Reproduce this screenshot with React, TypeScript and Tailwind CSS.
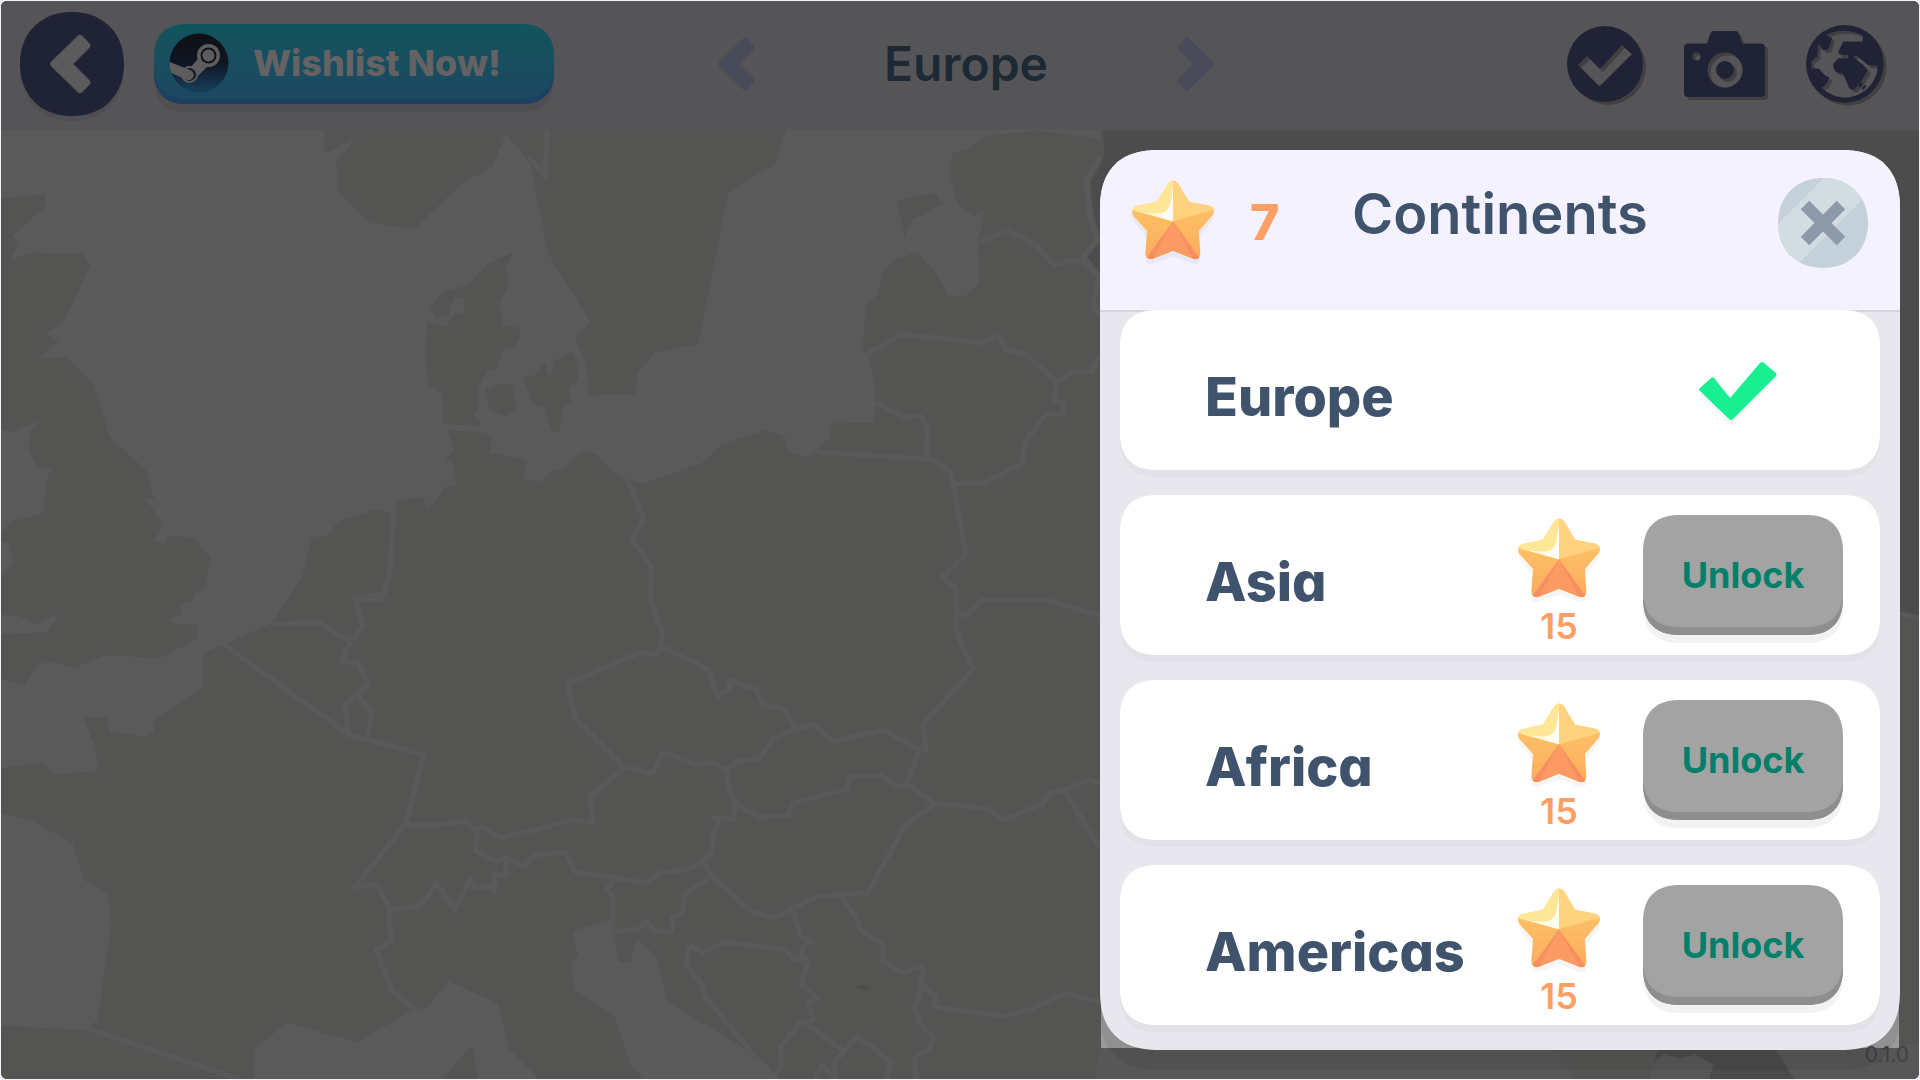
import React from 'react';

interface MapTile {
  transform: string;
  sea: string[];
  islands: string[];
  borders: string[];
}

interface Continent {
  name: string;
  cost: number;
  unlocked: boolean;
}

const continents: Continent[] = [
  { name: 'Europe', cost: 0, unlocked: true },
  { name: 'Asia', cost: 15, unlocked: false },
  { name: 'Africa', cost: 15, unlocked: false },
  { name: 'Americas', cost: 15, unlocked: false },
];

// The map is stored as four tiles, each in its own grid
const tiles: MapTile[] = [
  {
    transform: 'translate(0 120) scale(0.35714 0.33333)',
    sea: [
      '0,28 907,28 907,100 995,50 940,125 943,215 1035,308 1160,326 1290,190 1375,142 1415,42 1470,108 1485,135 1505,250 1530,390 1568,465 1568,715 1550,720 1540,765 1533,765 1525,728 1495,765 1465,772 1490,850 1522,862 1545,935 1568,935 1568,1050 1548,1050 1512,1085 1462,1075 1475,1020 1370,998 1377,950 1355,938 1250,930 1270,990 1245,1018 1268,1030 1275,1097 1245,1100 1200,1165 1180,1132 1105,1142 1100,1185 1055,1168 943,1205 915,1250 870,1250 845,1370 803,1440 540,1440 540,1425 575,1400 587,1312 540,1252 470,1248 460,1275 430,1262 455,1215 405,1135 430,1137 405,1048 305,953 260,790 185,712 100,715 165,662 122,640 175,610 250,435 230,400 90,397 27,417 50,370 33,345 122,262 122,220 0,235',
      '0,930 35,935 108,903 80,940 77,990 105,1045 140,1045 125,1090 120,1175 100,1185 35,1203 0,1235',
      '0,1265 20,1270 35,1325 0,1370',
    ],
    islands: [
      '1435,397 1365,430 1310,495 1237,515 1203,565 1222,592 1255,585 1270,530 1298,532 1297,585 1275,578 1245,620 1195,602 1190,700 1197,793 1238,820 1240,910 1350,918 1325,885 1340,860 1337,805 1365,752 1390,745 1410,680 1437,683 1458,650 1450,622 1408,615 1397,550 1422,500 1417,440',
      '1358,808 1395,792 1435,790 1447,872 1415,888 1368,868',
    ],
    borders: [
      '1102,1145 1090,1360 1072,1420 985,1440',
      '1530,28 1525,170 1480,108',
    ],
  },
  {
    transform: 'translate(540 120) scale(0.35714 0.33333)',
    sea: [
      '690,28 658,130 527,215 443,670 322,697 273,755 265,823 137,825 130,735 97,655 140,605 20,400 0,270 0,730 15,728 22,765 32,765 38,720 90,697 105,725 105,780 78,805 90,848 62,860 55,935 35,935 8,860 0,850 0,1085 35,1050 70,1045 112,995 155,1000 205,1055 240,1075 285,1090 455,1028 505,973 635,930 685,950 697,995 745,1012 775,990 808,955 817,910 935,908 940,810 918,705 903,695 912,560 945,520 960,450 990,420 1055,395 1110,460 1145,527 1190,527 1230,485 1227,370 1243,270 1215,288 1170,255 1148,170 1153,100 1200,85 1250,45 1400,30 1568,55 1568,28',
    ],
    islands: ['1000,245 1045,228 1107,220 1128,250 1040,300 1020,350'],
    borders: [
      '1230,365 1310,330 1385,370 1440,437 1485,420 1530,430 1565,470 1550,550 1568,590',
      '1568,110 1530,185 1540,280 1560,360 1522,410 1545,440',
      '910,705 1012,642 1240,668 1282,643 1305,688 1360,703 1447,785 1490,757 1545,755 1568,705',
      '1447,785 1440,840 1470,853 1460,883 1418,880 1358,965 1350,1030 1240,1090 1150,1090',
      '940,847 1020,893 1065,887 1087,925 1080,1015',
      '770,995 1100,1018 1150,1055 1160,1110 1193,1303 1125,1373 1165,1405 1165,1440',
      '240,1070 288,1195 258,1260 310,1340 308,1440',
    ],
  },
  {
    transform: 'translate(0 600) scale(0.35714 0.33333)',
    sea: [
      '0,45 50,47 97,75 165,40 125,97 0,103',
      '540,0 500,15 508,40 475,60 485,72 552,75 550,118 445,175 295,165 205,205 140,185 100,195 65,258 0,237 0,507 120,488 150,525 272,513 260,430 228,352 295,352 305,395 400,410 430,392 427,360 565,262 568,157 625,135 715,90 762,68 798,0',
      '0,643 80,660 200,730 233,842 300,880 308,980 270,1260 240,1293 0,1277',
      '708,1440 710,1350 800,1270 997,1327 1155,1232 1195,1223 1255,1145 1393,1212 1425,1350 1510,1440 1335,1440 1325,1345 1310,1345 1240,1440',
    ],
    islands: [],
    borders: [
      '620,130 975,405 1185,465 1135,672 992,862 1052,853 1088,925 1092,1022 1052,1052 1098,1175 1160,1230',
      '762,72 890,68 980,125 1015,78 995,0 1070,0',
      '980,125 955,185 1000,190 1030,252 965,315 972,400',
      '1000,285 1040,340 1027,412',
      '1135,675 1220,677 1300,665 1330,690 1350,683 1400,715 1512,687',
      '1335,690 1330,755 1390,785 1410,770 1465,800 1500,765 1512,765',
      '1415,780 1415,830 1385,820 1382,875 1375,860 1330,867 1315,840 1272,932 1220,850 1195,895 1165,922 1090,930',
      '240,1285 670,1440',
    ],
  },
  {
    transform: 'translate(540 600) scale(0.35714 0.33333)',
    sea: [
      '90,995 200,955 205,990 220,1088 250,1088 272,1020 325,1070 355,1205 620,1380 670,1440 290,1440 255,1400 207,1250 98,1175 83,1095 105,1065',
    ],
    islands: [],
    borders: [
      '308,0 343,100 328,165 280,158 75,252 98,357 232,500 315,522 343,458 435,493 485,490 522,510 550,485 612,478 650,420 712,387 768,375 820,425 962,390 1062,450 1028,550 1103,610 1250,627 1300,660 1408,612 1430,578 1468,572 1540,540 1568,550',
      '338,140 470,208 497,290 535,262 528,240 605,270 625,315 685,328 715,387',
      '232,505 140,590 147,668 90,660 0,687',
      '522,510 525,560 547,610 610,652 695,648 705,612 860,567 870,528 960,528 997,562 1028,553',
      '547,610 540,658 485,655 500,670 485,700 480,760 455,785 415,808 335,820 298,850 98,817 70,757 0,765',
      '455,785 480,830 590,935 657,955 775,890 918,880 1020,680 1103,612',
      '205,840 185,870 203,890 203,995 275,990 297,965 320,995 370,997 370,955 400,940 403,885 470,835',
      '415,1035 410,1100 450,1150 465,1195 600,1370',
      '415,1035 455,1058 515,1028 690,1052 710,1080 750,1080 730,1155 778,1195 748,1210 765,1260 725,1272 672,1345 675,1400 655,1430',
      '708,935 730,1010 757,1025 732,1045 735,1075',
      '840,890 885,950 895,990 963,1040 958,1085 1020,1120 1062,1100 1075,1115 1062,1150 1110,1192 1100,1222 1300,1250 1370,1232 1470,1182 1568,1207',
      '1070,1165 1047,1225 1065,1275 1105,1318 1085,1350 1050,1375 1052,1440',
      '740,1270 850,1355 890,1310 982,1388 968,1440',
      '850,1360 820,1390 830,1440 788,1400 770,1440',
      '1165,0 1165,95 1213,208 1073,372 1080,458',
      '1165,40 1195,45 1240,0 1420,0 1568,48',
      '1470,575 1568,745',
    ],
  },
];

const EuropeMap: React.FC = () => (
  <svg
    className="absolute inset-0 w-full h-full"
    viewBox="0 0 1920 1080"
    preserveAspectRatio="xMidYMid slice"
    aria-hidden="true"
  >
    <rect width="1920" height="1080" fill="#545452" />
    {tiles.map((tile) => (
      <g key={tile.transform} transform={tile.transform} strokeLinejoin="round">
        {tile.sea.map((points) => (
          <polygon key={points} points={points} fill="#5a5a5a" />
        ))}
        {tile.islands.map((points) => (
          <polygon key={points} points={points} fill="#545452" />
        ))}
        {tile.borders.map((points) => (
          <polyline key={points} points={points} fill="none" stroke="#595959" strokeWidth="15" />
        ))}
      </g>
    ))}
    <polygon
      points="1103,130 1105,155 1091,182 1094,215 1101,240 1088,257 1102,275 1110,400 1890,610 1920,616 1920,130"
      fill="#4c4c4c"
    />
    <polyline points="1890,612 1920,618" stroke="#595959" strokeWidth="5" />
    <polygon points="1660,1045 1774,1045 1795,1080 1650,1080" fill="#4a4a4a" />
    <polygon points="1795,1080 1774,1045 1920,1045 1920,1080" fill="#575757" />
    <polygon points="1101,1045 1550,1045 1577,1080 1095,1080" fill="#575757" />
    <path d="M1650 1067l14-12 18 4 14-4 18 10-4 15h-60z" fill="#575757" />
    <ellipse cx="863" cy="988" rx="7" ry="2" fill="#4c4c4a" />
  </svg>
);

const Star: React.FC<{ id: string }> = ({ id }) => (
  <svg className="w-[82px] h-[84px]" viewBox="69 60 246 252" aria-hidden="true">
    <defs>
      <clipPath id={`${id}-shape`}>
        <path d="M177 71Q192 52 208 71L240 125 301 137Q320 143 313 163L270 213 274 282Q272 301 254 297L192 272 130 297Q110 300 109 280L114 213 71 165Q65 145 80 139L144 125Z" />
      </clipPath>
      <linearGradient id={`${id}-side`} x1="0" y1="0" x2="0" y2="1">
        <stop offset="0.2" stopColor="#ffc668" />
        <stop offset="1" stopColor="#faaa5c" />
      </linearGradient>
      <linearGradient id={`${id}-shine`} x1="0" y1="0" x2="1" y2="0">
        <stop offset="0" stopColor="#fff2b4" />
        <stop offset="1" stopColor="#ffffff" />
      </linearGradient>
    </defs>
    <path
      d="M71 165L114 213 109 280Q110 300 130 297L192 272 254 297Q272 301 274 282L270 213 313 163V178L272 232 274 298Q272 316 254 312L192 290 130 312Q110 316 109 296L112 230 71 180Z"
      fill="#000000"
      opacity="0.04"
    />
    <g clipPath={`url(#${id}-shape)`}>
      <rect x="60" y="50" width="270" height="260" fill={`url(#${id}-side)`} />
      <polygon points="192,184 192,50 330,50 330,145" fill="#fed27e" />
      <polygon points="192,184 192,50 50,50 50,145" fill="#ffe797" />
      <path d="M192 184L72 150Q120 163 152 160 176 158 184 132L192 80Z" fill={`url(#${id}-shine)`} />
      <polygon points="192,184 276,310 108,310" fill="#fb9b63" />
      <polygon points="192,184 280,305 254,300" fill="#f68f5f" />
      <polygon points="192,184 104,305 130,300" fill="#f68f5f" />
    </g>
  </svg>
);

const Chevron: React.FC<{ className: string; right?: boolean }> = ({ className, right }) => (
  <svg className={className} viewBox="0 0 37 54" aria-hidden="true">
    <path
      d={
        right
          ? 'M1.500 12.500Q-.5 10 1.500 8L8 1.500Q10 -.5 12 1.500L36 25Q38 27 36 29L12 52.500Q10 54.500 8 52.500L1.500 46Q-.5 44 1.500 41.500L16 27Z'
          : 'M35.500 12.500Q37.500 10 35.500 8L29 1.500Q27 -.5 25 1.500L1 25Q-1 27 1 29L25 52.500Q27 54.500 29 52.500L35.500 46Q37.500 44 35.500 41.500L21 27Z'
      }
      fill="currentColor"
    />
  </svg>
);

const SteamLogo: React.FC = () => (
  <svg className="w-[60px] h-[60px] shrink-0" viewBox="0 0 60 60" aria-hidden="true">
    <defs>
      <linearGradient id="steam-bg" x1="0" y1="0" x2="0" y2="1">
        <stop offset="0" stopColor="#0f1013" />
        <stop offset="0.5" stopColor="#0f1523" />
        <stop offset="1" stopColor="#16405c" />
      </linearGradient>
      <clipPath id="steam-clip">
        <circle cx="30" cy="30" r="29.500" />
      </clipPath>
    </defs>
    <circle cx="30" cy="30" r="29.500" fill="url(#steam-bg)" />
    <g clipPath="url(#steam-clip)">
      <path d="M28 27L40 11 51 21 29 43 20 36Z" fill="#5d5d5d" />
      <circle cx="39.500" cy="22.500" r="11.500" fill="#5d5d5d" />
      <circle cx="39.500" cy="22.500" r="8" fill="#0f1219" />
      <circle cx="39.500" cy="22.500" r="6" fill="#5d5d5d" />
      <circle cx="20.500" cy="41.500" r="8.500" fill="#5d5d5d" />
      <circle cx="20.500" cy="41.500" r="6.500" fill="#111a29" />
      <path d="M-2 28L21 37A5 5 0 0 1 18 47L-2 38Z" fill="#5d5d5d" />
    </g>
  </svg>
);

const CheckBadgeIcon: React.FC = () => (
  <svg className="w-[76px] h-[76px] drop-shadow-[3px_3px_0_#404042]" viewBox="0 0 76 76" aria-hidden="true">
    <path
      fillRule="evenodd"
      d="M38 0A38 38 0 1 1 38 76A38 38 0 1 1 38 0ZM11 39L20 30 33 43 55 19 65 28 34 59Q32.500 61 31 59Z"
      fill="#202235"
    />
  </svg>
);

const CameraIcon: React.FC = () => (
  <svg className="w-[81px] h-[66px] drop-shadow-[3px_3px_0_#404042]" viewBox="0 0 81 66" aria-hidden="true">
    <path
      fillRule="evenodd"
      d="M4 12.500H23L26 3Q27 0 30 0H51Q54 0 55 3L58 12.500H77Q81 12.500 81 16.500V62Q81 66 77 66H4Q0 66 0 62V16.500Q0 12.500 4 12.500ZM12.500 21.500A4 4 0 1 0 12.500 29.500A4 4 0 1 0 12.500 21.500ZM41 21.500A17.500 17.500 0 1 0 41 56.500A17.500 17.500 0 1 0 41 21.500ZM41 30A9 9 0 1 1 41 48A9 9 0 1 1 41 30Z"
      fill="#202235"
    />
  </svg>
);

const GlobeIcon: React.FC = () => (
  <svg className="w-[78px] h-[78px] drop-shadow-[3px_3px_0_#404042]" viewBox="918 78 235 235" aria-hidden="true">
    <path
      fillRule="evenodd"
      d="M1035 78A117 117 0 1 1 1035 312A117 117 0 1 1 1035 78ZM978 108Q1000 95 1035 95 1065 96 1090 110L1088 128H1030L1015 160 1020 168H1045V178H1015L1000 195Q1000 215 1010 220L1030 225 1048 268Q1056 276 1066 270L1086 245 1104 215 1090 198 1062 177Q1060 168 1070 170L1105 198 1135 202Q1133 235 1108 265 1080 295 1035 297 995 295 965 268L980 255 988 236 972 228 958 210 935 208 934 188 952 172 955 133 970 155 985 152 997 118ZM1080 250L1090 256 1082 266 1076 262ZM1095 258L1100 262 1092 272 1087 270Z"
      fill="#202235"
    />
  </svg>
);

const UnlockAction: React.FC<{ continent: Continent }> = ({ continent }) => (
  <div className="flex items-start gap-[43px]">
    <div className="flex flex-col items-center pt-[3px]">
      <Star id={`star-${continent.name}`} />
      <span className="pt-0.5 text-[36px] leading-[44px] font-semibold text-[#fb9f67]">{continent.cost}</span>
    </div>
    <button
      type="button"
      className="w-[200px] h-[120px] rounded-[38px] bg-[#a3a3a3] text-[36px] font-bold text-[#00806a] shadow-[inset_0_-8px_0_#8e8e8e,0_8px_0_#f2f2f2] [corner-shape:superellipse(1.3)]"
    >
      Unlock
    </button>
  </div>
);

const ContinentsPanel: React.FC = () => (
  <section
    aria-labelledby="continents-title"
    className="absolute top-[149px] right-[19px] w-[800px] max-w-full bg-[#e8e7ee] rounded-[60px] shadow-[0_20px_0_rgba(0,0,0,0.06)] [corner-shape:superellipse(1.3)]"
  >
    <div className="absolute inset-x-px -z-10 bottom-0.5 h-20 bg-[#9a9a9a]" />
    <header className="flex items-start h-40 pt-7 pl-8 pr-8 bg-[#f4f2fe] rounded-t-[60px] shadow-[0_2px_0_#d6d5de] [corner-shape:superellipse(1.3)]">
      <div className="flex items-center gap-9 w-[220px] pt-0.5">
        <Star id="star-total" />
        <span className="text-[50px] leading-[64px] font-extrabold text-[#fb9f67]">7</span>
      </div>
      <h2 id="continents-title" className="text-[56px] leading-[72px] font-semibold text-[#40536d]">Continents</h2>
      <button
        type="button"
        aria-label="Close"
        className="ml-auto w-[90px] h-[90px] rounded-full overflow-hidden [corner-shape:superellipse(1.1)]"
      >
        <svg className="w-full h-full" viewBox="0 0 90 90" aria-hidden="true">
          <rect width="90" height="90" fill="#c5d1da" />
          <polygon points="0,46 46,0 106,0 22,84 0,106" fill="#d2dde2" />
          <path
            d="M27 27L63 63M63 27L27 63"
            stroke="#8e9aaa"
            strokeWidth="12"
          />
        </svg>
      </button>
    </header>
    <ul className="relative flex flex-col gap-[25px] px-5 pb-[25px]">
      {continents.map((continent) => (
        <li
          key={continent.name}
          className="flex items-start justify-between h-40 pt-5 pl-[85px] pr-[37px] bg-white rounded-[38px] shadow-[0_7px_0_#e2e1e8] [corner-shape:superellipse(1.3)]"
        >
          <span className="pt-[35px] text-[54px] leading-[64px] font-extrabold text-[#40536d]">{continent.name}</span>
          {continent.unlocked ? (
            <svg className="w-[78px] h-[64px] mt-8 mr-[66px]" viewBox="0 0 78 64" role="img" aria-label="Unlocked">
              <path d="M1 33L15 20 32 37 64 5 77 16 34 61Q32 63 30 61Z" fill="#000000" opacity="0.04" />
              <path d="M1 29Q-1 27.500 1 26L12 16Q13.500 14.500 15 16L31 36 61 1Q63 -1 65 1L77 11Q78 12.500 77 14L34 57Q32 59 30 57Z" fill="#17ef91" />
            </svg>
          ) : (
            <UnlockAction continent={continent} />
          )}
        </li>
      ))}
    </ul>
  </section>
);

const TopBar: React.FC = () => (
  <header className="relative flex items-center h-[129px] pb-[3px] pl-[19px] pr-[35px] bg-[#555557]">
    <button
      type="button"
      aria-label="Back"
      className="flex items-center justify-center w-[104px] h-[104px] pr-1 rounded-full bg-[#202235] text-[#5b5b5b] shadow-[0_5px_0_#4f4f51] [corner-shape:superellipse(1.1)]"
    >
      <Chevron className="w-[41px] h-[60px]" />
    </button>
    <button
      type="button"
      className="flex items-center gap-6 w-[400px] h-20 ml-[30px] pl-[15px] pb-0.5 rounded-[34px] bg-linear-to-b from-[#11545c] to-[#1d4762] text-[36px] font-extrabold text-[#656263] shadow-[inset_0_-5px_0_#1c3f62,0_8px_0_#4f4f51] [corner-shape:superellipse(1.3)]"
    >
      <SteamLogo />
      Wishlist Now!
    </button>
    <nav className="flex items-center justify-between w-[504px] ml-40 px-1 text-[#484c5a]">
      <button type="button" aria-label="Previous continent">
        <Chevron className="w-[37px] h-[54px]" />
      </button>
      <h1 className="text-[48px] leading-[64px] font-semibold text-[#1d2935]">Europe</h1>
      <button type="button" aria-label="Next continent">
        <Chevron className="w-[37px] h-[54px]" right />
      </button>
    </nav>
    <div className="flex items-center gap-[41px] ml-auto">
      <button type="button" aria-label="Completed"><CheckBadgeIcon /></button>
      <button type="button" aria-label="Take a picture"><CameraIcon /></button>
      <button type="button" aria-label="Continents"><GlobeIcon /></button>
    </div>
  </header>
);

const App: React.FC = () => {
  return (
    <div className="h-screen p-px bg-[#f1f4fa] font-['Inter',sans-serif] [font-feature-settings:'cv11']">
      <main className="relative isolate h-full rounded-md overflow-hidden bg-[#545452]">
        <div className="absolute inset-0 -z-20">
          <EuropeMap />
        </div>
        <TopBar />
        <span className="absolute right-2.5 bottom-2.5 text-[21px] leading-7 text-[#3f4049]">0.1.0</span>
        <ContinentsPanel />
      </main>
    </div>
  );
};

export default App;
